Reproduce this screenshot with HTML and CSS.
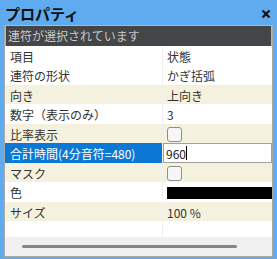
FILE: index.html
```html
<!DOCTYPE html>
<html lang="ja">
<head>
<meta charset="UTF-8">
<title>プロパティ</title>
<link rel="stylesheet" href="styles.css">
</head>
<body>
<div class="window">
  <div class="titlebar">
    <span class="title">プロパティ</span>
    <svg class="close" width="10" height="10" viewBox="0 0 10 10"><path d="M1.5 1.5L8.5 8.5M8.5 1.5L1.5 8.5" stroke="#111" stroke-width="2.2"/></svg>
  </div>
  <div class="panel">
    <div class="status">連符が選択されています</div>
    <div class="grid">
      <div class="row"><div class="name">項目</div><div class="val">状態</div></div>
      <div class="row"><div class="name">連符の形状</div><div class="val">かぎ括弧</div></div>
      <div class="row alt"><div class="name">向き</div><div class="val">上向き</div></div>
      <div class="row"><div class="name">数字（表示のみ）</div><div class="val">3</div></div>
      <div class="row alt"><div class="name">比率表示</div><div class="val"><span class="check"></span></div></div>
      <div class="row sel"><div class="name">合計時間(4分音符=480)</div><div class="val edit">960<span class="caret"></span></div></div>
      <div class="row alt"><div class="name">マスク</div><div class="val"><span class="check"></span></div></div>
      <div class="row"><div class="name">色</div><div class="val"><span class="swatch"></span></div></div>
      <div class="row alt"><div class="name">サイズ</div><div class="val">100 %</div></div>
      <div class="row empty"><div class="name"></div><div class="val"></div></div>
    </div>
    <div class="hscroll"><div class="thumb"></div></div>
  </div>
</div>
</body>
</html>
```
FILE: styles.css
```css
body, html {
  margin: 0;
  height: 100%;
  background: #5eabef;
  font-family: "Noto Sans CJK JP", "Noto Sans", sans-serif;
}
.window {
  padding: 0 4px 2px 4px;
}
.titlebar {
  height: 25px;
  display: flex;
  justify-content: space-between;
  align-items: center;
}
.title {
  font-size: 15px;
  font-weight: bold;
  color: #111;
  padding-left: 1px;
  padding-top: 1px;
}
.close {
  margin-right: 2px;
  margin-top: 3px;
}
.panel {
  background: #fff;
  border: 1px solid #a8a8a8;
  border-top: 0;
  height: 231px;
  display: flex;
  flex-direction: column;
  overflow: hidden;
}
.status {
  height: 21px;
  line-height: 19px;
  background: #434547;
  color: #c8c8c8;
  font-size: 12px;
  padding-left: 2px;
  border: 1px solid #b8b8b8;
  border-bottom: 0;
  box-sizing: border-box;
}
.grid {
  flex: 1;
}
.row {
  display: flex;
  height: 19.5px;
  font-size: 12px;
  color: #333;
  background: #fff;
}
.row.alt {
  background: #f4f2de;
}
.name {
  width: 158px;
  padding-left: 5px;
  padding-top: 1px;
  line-height: 19px;
  box-sizing: border-box;
  border-right: 1px solid #f0f0f0;
  white-space: nowrap;
}
.val {
  flex: 1;
  padding-left: 4px;
  padding-top: 1px;
  line-height: 19px;
  display: flex;
  align-items: center;
}
.row.sel .name {
  background: #0a78d4;
  color: #fff;
}
.val.edit {
  background: #fff;
  border: 1px solid #a0a0a0;
  padding-left: 2px;
  padding-top: 0;
  color: #222;
}
.caret {
  display: inline-block;
  width: 1px;
  height: 14px;
  background: #000;
}
.check {
  width: 13px;
  height: 13px;
  border: 1px solid #8e8e8e;
  border-radius: 3px;
  background: #f6f6f6;
}
.swatch {
  height: 12px;
  flex: 1;
  background: #000;
  margin-right: -2px;
}
.row.empty {
  height: 16px;
}
.hscroll {
  height: 19px;
  background: #f0f0f0;
  display: flex;
  align-items: center;
  padding-left: 17px;
}
.thumb {
  width: 215px;
  height: 3px;
  border-radius: 2px;
  background: #858585;
}
```
